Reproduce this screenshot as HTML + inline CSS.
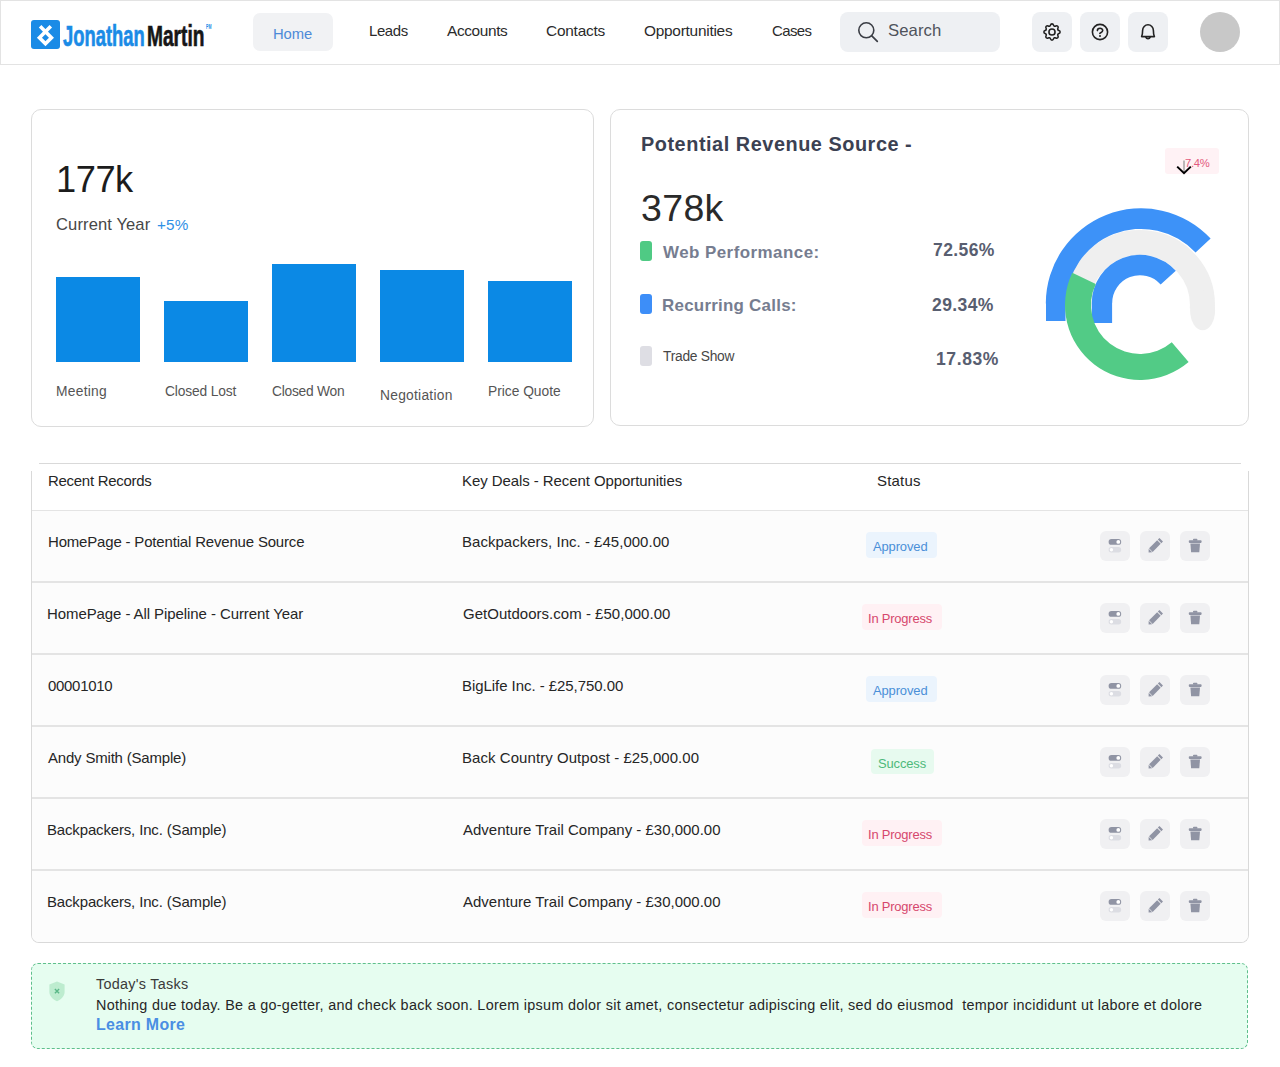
<!DOCTYPE html>
<html><head><meta charset="utf-8"><title>Dashboard</title>
<style>
html,body{margin:0;padding:0;background:#ffffff;}
body{width:1280px;height:1067px;position:relative;overflow:hidden;font-family:"Liberation Sans",sans-serif;}
.t{position:absolute;white-space:pre;font-family:"Liberation Sans",sans-serif;}
.b{position:absolute;box-sizing:border-box;}
svg{position:absolute;overflow:visible;}
</style></head><body>

<div class="b" style="left:0;top:0;width:1280px;height:65px;border:1px solid #e3e3e3;background:#fff"></div>
<svg style="left:31px;top:20px" width="29" height="29" viewBox="0 0 29 29"><rect x="0" y="0" width="29" height="29" rx="3" fill="#1a8be6"/><path d="M9.1 6.3 L20.45 17.65 L14.45 23.65 L8.45 17.65 L19.8 6.3" fill="none" stroke="#fff" stroke-width="3.6" stroke-linejoin="miter" stroke-miterlimit="10"/></svg>
<div class="b" style="left:253px;top:13px;width:80px;height:38px;border-radius:7px;background:#f1f2f4"></div>
<div class="b" style="left:840px;top:12px;width:160px;height:40px;border-radius:8px;background:#eef0f3"></div>
<svg style="left:840px;top:12px" width="40" height="40" viewBox="840 12 40 40"><circle cx="866.3" cy="30.3" r="7.5" fill="none" stroke="#3b3e45" stroke-width="1.6"/><path d="M871.8 35.8 L877.3 41.3" stroke="#3b3e45" stroke-width="1.7" stroke-linecap="round"/></svg>
<div class="b" style="left:1032px;top:12px;width:40px;height:40px;border-radius:8px;background:#eef0f3"></div>
<div class="b" style="left:1080px;top:12px;width:40px;height:40px;border-radius:8px;background:#eef0f3"></div>
<div class="b" style="left:1128px;top:12px;width:40px;height:40px;border-radius:8px;background:#eef0f3"></div>
<svg style="left:1036px;top:16px" width="32" height="32" viewBox="0 0 32 32"><g transform="translate(16 16) scale(0.9) translate(-12 -12)" fill="none" stroke="#222" stroke-width="1.75" stroke-linejoin="round"><path d="M10.325 4.317c.426 -1.756 2.924 -1.756 3.35 0a1.724 1.724 0 0 0 2.573 1.066c1.543 -.94 3.31 .826 2.37 2.37a1.724 1.724 0 0 0 1.065 2.572c1.756 .426 1.756 2.924 0 3.35a1.724 1.724 0 0 0 -1.066 2.573c.94 1.543 -.826 3.31 -2.37 2.37a1.724 1.724 0 0 0 -2.572 1.065c-.426 1.756 -2.924 1.756 -3.35 0a1.724 1.724 0 0 0 -2.573 -1.066c-1.543 .94 -3.31 -.826 -2.37 -2.37a1.724 1.724 0 0 0 -1.065 -2.572c-1.756 -.426 -1.756 -2.924 0 -3.35a1.724 1.724 0 0 0 1.066 -2.573c-.94 -1.543 .826 -3.31 2.37 -2.37c1 .608 2.296 .07 2.572 -1.065z"/><circle cx="12" cy="12" r="3.4"/></g></svg>
<svg style="left:1084px;top:16px" width="32" height="32" viewBox="0 0 32 32"><g fill="none" stroke="#222" stroke-width="1.6" stroke-linecap="round"><circle cx="16" cy="16" r="7.6"/><path d="M13.4 14.6 C13.4 11.4 18.7 11.4 18.7 14.5 C18.7 16.2 16.6 16.6 15.8 17.3"/></g><circle cx="16" cy="20" r="1" fill="#222"/></svg>
<svg style="left:1132px;top:16px" width="32" height="32" viewBox="0 0 32 32"><g fill="none" stroke="#222" stroke-width="1.6" stroke-linejoin="round" stroke-linecap="round"><path d="M9.6 20.6 Q10.6 18.6 10.6 14.4 A5.4 5.6 0 0 1 21.4 14.4 Q21.4 18.6 22.4 20.6 Z"/><path d="M13.8 21 A2.3 2.3 0 0 0 18.2 21"/></g></svg>
<div class="b" style="left:1200px;top:12px;width:40px;height:40px;border-radius:50%;background:#c8c8c8"></div>
<div class="b" style="left:31px;top:109px;width:563px;height:318px;border:1px solid #dcdcdc;border-radius:10px;background:#fff"></div>
<div class="b" style="left:56px;top:277px;width:84px;height:85px;background:#0b89e5"></div>
<div class="b" style="left:164px;top:301px;width:84px;height:61px;background:#0b89e5"></div>
<div class="b" style="left:272px;top:264px;width:84px;height:98px;background:#0b89e5"></div>
<div class="b" style="left:380px;top:270px;width:84px;height:92px;background:#0b89e5"></div>
<div class="b" style="left:488px;top:281px;width:84px;height:81px;background:#0b89e5"></div>
<div class="b" style="left:610px;top:109px;width:639px;height:317px;border:1px solid #dcdcdc;border-radius:10px;background:#fff"></div>
<div class="b" style="left:640px;top:241px;width:12px;height:20px;border-radius:3px;background:#4fca84"></div>
<div class="b" style="left:640px;top:293.5px;width:12px;height:20px;border-radius:3px;background:#3d8ef8"></div>
<div class="b" style="left:640px;top:346px;width:12px;height:19.5px;border-radius:3px;background:#dedee4"></div>
<div class="b" style="left:1165px;top:148px;width:54px;height:26px;border-radius:3px;background:#fff2f5"></div>
<svg style="left:1020px;top:190px" width="220" height="210" viewBox="1020 190 220 210"><path d="M1077.84 299.56 A62.40 62.40 0 0 1 1202.25 309.35" fill="none" stroke="#efefef" stroke-width="25"/><ellipse cx="1202.6" cy="310.5" rx="12.5" ry="19.8" fill="#efefef"/><path d="M1045.80 303.50 A95.20 95.20 0 0 1 1210.62 238.57 L1195.56 252.62 A74.60 74.60 0 0 0 1066.40 303.50 Z M1046 303.5 L1065.5 303.5 L1065.5 321 L1046 321 Z" fill="#3d92f8"/><path d="M1091.80 303.00 A48.20 48.20 0 0 1 1175.82 270.75 L1160.66 284.40 A27.80 27.80 0 0 0 1112.20 303.00 Z M1091.8 303 L1112.1 303 L1112.1 323 L1091.8 323 Z" fill="#3d92f8"/><path d="M1188.61 362.12 A75.00 75.00 0 0 1 1072.31 272.71 L1095.77 283.90 A49.00 49.00 0 0 0 1171.76 342.32 Z" fill="#52cb86"/></svg>
<div class="b" style="left:39px;top:463px;width:1202px;height:1px;background:#d9d9d9"></div>
<div class="b" style="left:31px;top:471px;width:1218px;height:472px;border:1px solid #d9d9d9;border-top:none;border-radius:0 0 8px 8px;background:#fff"></div>
<div class="b" style="left:32px;top:510px;width:1216px;height:1px;background:#e4e4e4"></div>
<div class="b" style="left:32px;top:511px;width:1216px;height:70px;background:#fcfcfc;"></div>
<div class="b" style="left:32px;top:581px;width:1216px;height:2px;background:#e4e4e4"></div>
<div class="b" style="left:32px;top:583px;width:1216px;height:70px;background:#fcfcfc;"></div>
<div class="b" style="left:32px;top:653px;width:1216px;height:2px;background:#e4e4e4"></div>
<div class="b" style="left:32px;top:655px;width:1216px;height:70px;background:#fcfcfc;"></div>
<div class="b" style="left:32px;top:725px;width:1216px;height:2px;background:#e4e4e4"></div>
<div class="b" style="left:32px;top:727px;width:1216px;height:70px;background:#fcfcfc;"></div>
<div class="b" style="left:32px;top:797px;width:1216px;height:2px;background:#e4e4e4"></div>
<div class="b" style="left:32px;top:799px;width:1216px;height:70px;background:#fcfcfc;"></div>
<div class="b" style="left:32px;top:869px;width:1216px;height:2px;background:#e4e4e4"></div>
<div class="b" style="left:32px;top:871px;width:1216px;height:71px;background:#fcfcfc;border-radius:0 0 7px 7px;"></div>
<div class="b" style="left:866px;top:532.2px;width:71px;height:25.5px;border-radius:4px;background:#ebf4fd"></div>
<div class="b" style="left:1100px;top:531px;width:30px;height:30px;border-radius:6px;background:#f0f0f2"></div>
<div class="b" style="left:1140px;top:531px;width:30px;height:30px;border-radius:6px;background:#f0f0f2"></div>
<div class="b" style="left:1180px;top:531px;width:30px;height:30px;border-radius:6px;background:#f0f0f2"></div>
<svg style="left:1100px;top:531px" width="30" height="30" viewBox="0 0 30 30"><rect x="8.6" y="8" width="12.6" height="5.8" rx="2.9" fill="#9094a4"/><circle cx="18.3" cy="10.9" r="1.9" fill="#fff"/><rect x="8.6" y="16" width="12.6" height="5.4" rx="2.7" fill="#dcdde3"/><circle cx="11.4" cy="18.7" r="1.7" fill="#fff"/></svg>
<svg style="left:1140px;top:531px" width="30" height="30" viewBox="0 0 30 30"><path d="M9.09 17.37 L17.16 9.31 L20.69 12.84 L12.63 20.91 Z" fill="#9094a4"/><path d="M17.86 8.60 L19.43 7.03 L22.97 10.57 L21.40 12.14 Z" fill="#9094a4"/><path d="M8.60 21.40 L8.67 17.79 L12.21 21.33 Z" fill="#9094a4"/></svg>
<svg style="left:1180px;top:531px" width="30" height="30" viewBox="0 0 30 30"><rect x="8.8" y="9.3" width="12.8" height="2.6" rx="0.8" fill="#9094a4"/><rect x="13" y="7.8" width="4.4" height="2" rx="0.8" fill="#9094a4"/><path d="M10.4 12.6 L20 12.6 L19.3 21.2 L11.1 21.2 Z" fill="#9094a4"/></svg>
<div class="b" style="left:862px;top:604.2px;width:80px;height:25.5px;border-radius:4px;background:#fff1f4"></div>
<div class="b" style="left:1100px;top:603px;width:30px;height:30px;border-radius:6px;background:#f0f0f2"></div>
<div class="b" style="left:1140px;top:603px;width:30px;height:30px;border-radius:6px;background:#f0f0f2"></div>
<div class="b" style="left:1180px;top:603px;width:30px;height:30px;border-radius:6px;background:#f0f0f2"></div>
<svg style="left:1100px;top:603px" width="30" height="30" viewBox="0 0 30 30"><rect x="8.6" y="8" width="12.6" height="5.8" rx="2.9" fill="#9094a4"/><circle cx="18.3" cy="10.9" r="1.9" fill="#fff"/><rect x="8.6" y="16" width="12.6" height="5.4" rx="2.7" fill="#dcdde3"/><circle cx="11.4" cy="18.7" r="1.7" fill="#fff"/></svg>
<svg style="left:1140px;top:603px" width="30" height="30" viewBox="0 0 30 30"><path d="M9.09 17.37 L17.16 9.31 L20.69 12.84 L12.63 20.91 Z" fill="#9094a4"/><path d="M17.86 8.60 L19.43 7.03 L22.97 10.57 L21.40 12.14 Z" fill="#9094a4"/><path d="M8.60 21.40 L8.67 17.79 L12.21 21.33 Z" fill="#9094a4"/></svg>
<svg style="left:1180px;top:603px" width="30" height="30" viewBox="0 0 30 30"><rect x="8.8" y="9.3" width="12.8" height="2.6" rx="0.8" fill="#9094a4"/><rect x="13" y="7.8" width="4.4" height="2" rx="0.8" fill="#9094a4"/><path d="M10.4 12.6 L20 12.6 L19.3 21.2 L11.1 21.2 Z" fill="#9094a4"/></svg>
<div class="b" style="left:866px;top:676.2px;width:71px;height:25.5px;border-radius:4px;background:#ebf4fd"></div>
<div class="b" style="left:1100px;top:675px;width:30px;height:30px;border-radius:6px;background:#f0f0f2"></div>
<div class="b" style="left:1140px;top:675px;width:30px;height:30px;border-radius:6px;background:#f0f0f2"></div>
<div class="b" style="left:1180px;top:675px;width:30px;height:30px;border-radius:6px;background:#f0f0f2"></div>
<svg style="left:1100px;top:675px" width="30" height="30" viewBox="0 0 30 30"><rect x="8.6" y="8" width="12.6" height="5.8" rx="2.9" fill="#9094a4"/><circle cx="18.3" cy="10.9" r="1.9" fill="#fff"/><rect x="8.6" y="16" width="12.6" height="5.4" rx="2.7" fill="#dcdde3"/><circle cx="11.4" cy="18.7" r="1.7" fill="#fff"/></svg>
<svg style="left:1140px;top:675px" width="30" height="30" viewBox="0 0 30 30"><path d="M9.09 17.37 L17.16 9.31 L20.69 12.84 L12.63 20.91 Z" fill="#9094a4"/><path d="M17.86 8.60 L19.43 7.03 L22.97 10.57 L21.40 12.14 Z" fill="#9094a4"/><path d="M8.60 21.40 L8.67 17.79 L12.21 21.33 Z" fill="#9094a4"/></svg>
<svg style="left:1180px;top:675px" width="30" height="30" viewBox="0 0 30 30"><rect x="8.8" y="9.3" width="12.8" height="2.6" rx="0.8" fill="#9094a4"/><rect x="13" y="7.8" width="4.4" height="2" rx="0.8" fill="#9094a4"/><path d="M10.4 12.6 L20 12.6 L19.3 21.2 L11.1 21.2 Z" fill="#9094a4"/></svg>
<div class="b" style="left:871px;top:748.7px;width:63px;height:25.5px;border-radius:4px;background:#e7faef"></div>
<div class="b" style="left:1100px;top:747px;width:30px;height:30px;border-radius:6px;background:#f0f0f2"></div>
<div class="b" style="left:1140px;top:747px;width:30px;height:30px;border-radius:6px;background:#f0f0f2"></div>
<div class="b" style="left:1180px;top:747px;width:30px;height:30px;border-radius:6px;background:#f0f0f2"></div>
<svg style="left:1100px;top:747px" width="30" height="30" viewBox="0 0 30 30"><rect x="8.6" y="8" width="12.6" height="5.8" rx="2.9" fill="#9094a4"/><circle cx="18.3" cy="10.9" r="1.9" fill="#fff"/><rect x="8.6" y="16" width="12.6" height="5.4" rx="2.7" fill="#dcdde3"/><circle cx="11.4" cy="18.7" r="1.7" fill="#fff"/></svg>
<svg style="left:1140px;top:747px" width="30" height="30" viewBox="0 0 30 30"><path d="M9.09 17.37 L17.16 9.31 L20.69 12.84 L12.63 20.91 Z" fill="#9094a4"/><path d="M17.86 8.60 L19.43 7.03 L22.97 10.57 L21.40 12.14 Z" fill="#9094a4"/><path d="M8.60 21.40 L8.67 17.79 L12.21 21.33 Z" fill="#9094a4"/></svg>
<svg style="left:1180px;top:747px" width="30" height="30" viewBox="0 0 30 30"><rect x="8.8" y="9.3" width="12.8" height="2.6" rx="0.8" fill="#9094a4"/><rect x="13" y="7.8" width="4.4" height="2" rx="0.8" fill="#9094a4"/><path d="M10.4 12.6 L20 12.6 L19.3 21.2 L11.1 21.2 Z" fill="#9094a4"/></svg>
<div class="b" style="left:862px;top:820.2px;width:80px;height:25.5px;border-radius:4px;background:#fff1f4"></div>
<div class="b" style="left:1100px;top:819px;width:30px;height:30px;border-radius:6px;background:#f0f0f2"></div>
<div class="b" style="left:1140px;top:819px;width:30px;height:30px;border-radius:6px;background:#f0f0f2"></div>
<div class="b" style="left:1180px;top:819px;width:30px;height:30px;border-radius:6px;background:#f0f0f2"></div>
<svg style="left:1100px;top:819px" width="30" height="30" viewBox="0 0 30 30"><rect x="8.6" y="8" width="12.6" height="5.8" rx="2.9" fill="#9094a4"/><circle cx="18.3" cy="10.9" r="1.9" fill="#fff"/><rect x="8.6" y="16" width="12.6" height="5.4" rx="2.7" fill="#dcdde3"/><circle cx="11.4" cy="18.7" r="1.7" fill="#fff"/></svg>
<svg style="left:1140px;top:819px" width="30" height="30" viewBox="0 0 30 30"><path d="M9.09 17.37 L17.16 9.31 L20.69 12.84 L12.63 20.91 Z" fill="#9094a4"/><path d="M17.86 8.60 L19.43 7.03 L22.97 10.57 L21.40 12.14 Z" fill="#9094a4"/><path d="M8.60 21.40 L8.67 17.79 L12.21 21.33 Z" fill="#9094a4"/></svg>
<svg style="left:1180px;top:819px" width="30" height="30" viewBox="0 0 30 30"><rect x="8.8" y="9.3" width="12.8" height="2.6" rx="0.8" fill="#9094a4"/><rect x="13" y="7.8" width="4.4" height="2" rx="0.8" fill="#9094a4"/><path d="M10.4 12.6 L20 12.6 L19.3 21.2 L11.1 21.2 Z" fill="#9094a4"/></svg>
<div class="b" style="left:862px;top:892.2px;width:80px;height:25.5px;border-radius:4px;background:#fff1f4"></div>
<div class="b" style="left:1100px;top:891px;width:30px;height:30px;border-radius:6px;background:#f0f0f2"></div>
<div class="b" style="left:1140px;top:891px;width:30px;height:30px;border-radius:6px;background:#f0f0f2"></div>
<div class="b" style="left:1180px;top:891px;width:30px;height:30px;border-radius:6px;background:#f0f0f2"></div>
<svg style="left:1100px;top:891px" width="30" height="30" viewBox="0 0 30 30"><rect x="8.6" y="8" width="12.6" height="5.8" rx="2.9" fill="#9094a4"/><circle cx="18.3" cy="10.9" r="1.9" fill="#fff"/><rect x="8.6" y="16" width="12.6" height="5.4" rx="2.7" fill="#dcdde3"/><circle cx="11.4" cy="18.7" r="1.7" fill="#fff"/></svg>
<svg style="left:1140px;top:891px" width="30" height="30" viewBox="0 0 30 30"><path d="M9.09 17.37 L17.16 9.31 L20.69 12.84 L12.63 20.91 Z" fill="#9094a4"/><path d="M17.86 8.60 L19.43 7.03 L22.97 10.57 L21.40 12.14 Z" fill="#9094a4"/><path d="M8.60 21.40 L8.67 17.79 L12.21 21.33 Z" fill="#9094a4"/></svg>
<svg style="left:1180px;top:891px" width="30" height="30" viewBox="0 0 30 30"><rect x="8.8" y="9.3" width="12.8" height="2.6" rx="0.8" fill="#9094a4"/><rect x="13" y="7.8" width="4.4" height="2" rx="0.8" fill="#9094a4"/><path d="M10.4 12.6 L20 12.6 L19.3 21.2 L11.1 21.2 Z" fill="#9094a4"/></svg>
<div class="b" style="left:31px;top:963px;width:1217px;height:86px;border:1px dashed #5fbf8c;border-radius:7px;background:#e6fdf0"></div>
<svg style="left:48px;top:981px" width="18" height="21" viewBox="0 0 18 21"><path d="M9 0.6 L16.6 3.4 L16.6 11 C16.6 15.2 13 18.6 9 20.2 C5 18.6 1.4 15.2 1.4 11 L1.4 3.4 Z" fill="#bdeccf"/><path d="M6.9 8 L11.1 12.2 M11.1 8 L6.9 12.2" stroke="#5bb888" stroke-width="1.4"/></svg>
<div class="t" style="left:63px;top:21px;color:#1a8be6;font-weight:700;font-size:29.94px;line-height:29.94px;letter-spacing:0.000px;transform:scaleX(0.6137);transform-origin:0 0;-webkit-text-stroke:0.7px #1a8be6;">Jonathan</div>
<div class="t" style="left:147px;top:21px;color:#161616;font-weight:700;font-size:29.94px;line-height:29.94px;letter-spacing:0.000px;transform:scaleX(0.6397);transform-origin:0 0;-webkit-text-stroke:0.7px #161616;">Martin</div>
<div class="t" style="left:206px;top:24px;color:#1a8be6;font-weight:700;font-size:6.40px;line-height:6.40px;letter-spacing:0.000px;transform:scaleX(0.5669);transform-origin:0 0;">PM</div>
<div class="t" style="left:273px;top:27px;color:#4d8ad8;font-weight:400;font-size:14.81px;line-height:14.81px;letter-spacing:-0.067px;">Home</div>
<div class="t" style="left:369px;top:24px;color:#2b2b2b;font-weight:400;font-size:14.94px;line-height:14.94px;letter-spacing:-0.400px;">Leads</div>
<div class="t" style="left:447px;top:23px;color:#2b2b2b;font-weight:400;font-size:15.41px;line-height:15.41px;letter-spacing:-0.371px;">Accounts</div>
<div class="t" style="left:546px;top:23px;color:#2b2b2b;font-weight:400;font-size:15.41px;line-height:15.41px;letter-spacing:-0.229px;">Contacts</div>
<div class="t" style="left:644px;top:23px;color:#2b2b2b;font-weight:400;font-size:15.41px;line-height:15.41px;letter-spacing:-0.250px;">Opportunities</div>
<div class="t" style="left:772px;top:24px;color:#2b2b2b;font-weight:400;font-size:14.94px;line-height:14.94px;letter-spacing:-0.600px;">Cases</div>
<div class="t" style="left:888px;top:23px;color:#4f535b;font-weight:400;font-size:16.72px;line-height:16.72px;letter-spacing:0.080px;">Search</div>
<div class="t" style="left:56px;top:162px;color:#1c1c1c;font-weight:400;font-size:36.28px;line-height:36.28px;letter-spacing:-0.467px;">177k</div>
<div class="t" style="left:56px;top:217px;color:#474747;font-weight:400;font-size:16.57px;line-height:16.57px;letter-spacing:0.109px;">Current Year</div>
<div class="t" style="left:157px;top:217px;color:#2f8fe6;font-weight:400;font-size:15.24px;line-height:15.24px;letter-spacing:0.200px;">+5%</div>
<div class="t" style="left:56px;top:385px;color:#555555;font-weight:400;font-size:13.81px;line-height:13.81px;letter-spacing:0.267px;">Meeting</div>
<div class="t" style="left:165px;top:385px;color:#555555;font-weight:400;font-size:13.81px;line-height:13.81px;letter-spacing:-0.140px;">Closed Lost</div>
<div class="t" style="left:272px;top:385px;color:#555555;font-weight:400;font-size:13.81px;line-height:13.81px;letter-spacing:-0.244px;">Closed Won</div>
<div class="t" style="left:380px;top:389px;color:#555555;font-weight:400;font-size:13.81px;line-height:13.81px;letter-spacing:0.260px;">Negotiation</div>
<div class="t" style="left:488px;top:385px;color:#555555;font-weight:400;font-size:13.81px;line-height:13.81px;letter-spacing:-0.020px;">Price Quote</div>
<div class="t" style="left:641px;top:135px;color:#3b4152;font-weight:700;font-size:19.86px;line-height:19.86px;letter-spacing:0.544px;">Potential Revenue Source -</div>
<div class="t" style="left:641px;top:190px;color:#2a2a2a;font-weight:400;font-size:37.50px;line-height:37.50px;letter-spacing:0.333px;">378k</div>
<div class="t" style="left:663px;top:245px;color:#767d90;font-weight:700;font-size:16.95px;line-height:16.95px;letter-spacing:0.453px;">Web Performance:</div>
<div class="t" style="left:933px;top:242px;color:#585e70;font-weight:700;font-size:17.55px;line-height:17.55px;letter-spacing:0.400px;">72.56%</div>
<div class="t" style="left:662px;top:298px;color:#767d90;font-weight:700;font-size:16.95px;line-height:16.95px;letter-spacing:0.240px;">Recurring Calls:</div>
<div class="t" style="left:932px;top:297px;color:#585e70;font-weight:700;font-size:17.55px;line-height:17.55px;letter-spacing:0.400px;">29.34%</div>
<div class="t" style="left:663px;top:350px;color:#474747;font-weight:400;font-size:13.81px;line-height:13.81px;letter-spacing:-0.267px;">Trade Show</div>
<div class="t" style="left:936px;top:351px;color:#585e70;font-weight:700;font-size:17.55px;line-height:17.55px;letter-spacing:0.600px;">17.83%</div>
<div class="t" style="left:1185px;top:158px;color:#e35a7d;font-weight:400;font-size:11.26px;line-height:11.26px;letter-spacing:-0.333px;">7.4%</div>
<div class="t" style="left:48px;top:474px;color:#262626;font-weight:400;font-size:14.97px;line-height:14.97px;letter-spacing:-0.277px;">Recent Records</div>
<div class="t" style="left:462px;top:474px;color:#262626;font-weight:400;font-size:14.97px;line-height:14.97px;letter-spacing:-0.065px;">Key Deals - Recent Opportunities</div>
<div class="t" style="left:877px;top:474px;color:#262626;font-weight:400;font-size:14.97px;line-height:14.97px;letter-spacing:0.200px;">Status</div>
<div class="t" style="left:48px;top:535px;color:#262626;font-weight:400;font-size:14.97px;line-height:14.97px;letter-spacing:-0.165px;">HomePage - Potential Revenue Source</div>
<div class="t" style="left:462px;top:535px;color:#262626;font-weight:400;font-size:14.97px;line-height:14.97px;letter-spacing:0.034px;">Backpackers, Inc. - £45,000.00</div>
<div class="t" style="left:47px;top:607px;color:#262626;font-weight:400;font-size:14.97px;line-height:14.97px;letter-spacing:-0.070px;">HomePage - All Pipeline - Current Year</div>
<div class="t" style="left:463px;top:607px;color:#262626;font-weight:400;font-size:14.97px;line-height:14.97px;letter-spacing:0.037px;">GetOutdoors.com - £50,000.00</div>
<div class="t" style="left:48px;top:679px;color:#262626;font-weight:400;font-size:14.97px;line-height:14.97px;letter-spacing:-0.286px;">00001010</div>
<div class="t" style="left:462px;top:679px;color:#262626;font-weight:400;font-size:14.97px;line-height:14.97px;letter-spacing:-0.042px;">BigLife Inc. - £25,750.00</div>
<div class="t" style="left:48px;top:751px;color:#262626;font-weight:400;font-size:14.97px;line-height:14.97px;letter-spacing:-0.178px;">Andy Smith (Sample)</div>
<div class="t" style="left:462px;top:751px;color:#262626;font-weight:400;font-size:14.97px;line-height:14.97px;letter-spacing:0.075px;">Back Country Outpost - £25,000.00</div>
<div class="t" style="left:47px;top:823px;color:#262626;font-weight:400;font-size:14.97px;line-height:14.97px;letter-spacing:-0.144px;">Backpackers, Inc. (Sample)</div>
<div class="t" style="left:463px;top:823px;color:#262626;font-weight:400;font-size:14.97px;line-height:14.97px;letter-spacing:0.011px;">Adventure Trail Company - £30,000.00</div>
<div class="t" style="left:47px;top:895px;color:#262626;font-weight:400;font-size:14.97px;line-height:14.97px;letter-spacing:-0.144px;">Backpackers, Inc. (Sample)</div>
<div class="t" style="left:463px;top:895px;color:#262626;font-weight:400;font-size:14.97px;line-height:14.97px;letter-spacing:0.011px;">Adventure Trail Company - £30,000.00</div>
<div class="t" style="left:873px;top:541px;color:#4a8fd8;font-weight:400;font-size:12.94px;line-height:12.94px;letter-spacing:-0.114px;">Approved</div>
<div class="t" style="left:868px;top:613px;color:#d6476d;font-weight:400;font-size:12.94px;line-height:12.94px;letter-spacing:-0.200px;">In Progress</div>
<div class="t" style="left:873px;top:685px;color:#4a8fd8;font-weight:400;font-size:12.94px;line-height:12.94px;letter-spacing:-0.114px;">Approved</div>
<div class="t" style="left:878px;top:758px;color:#4db97a;font-weight:400;font-size:12.94px;line-height:12.94px;letter-spacing:-0.133px;">Success</div>
<div class="t" style="left:868px;top:829px;color:#d6476d;font-weight:400;font-size:12.94px;line-height:12.94px;letter-spacing:-0.200px;">In Progress</div>
<div class="t" style="left:868px;top:901px;color:#d6476d;font-weight:400;font-size:12.94px;line-height:12.94px;letter-spacing:-0.200px;">In Progress</div>
<div class="t" style="left:96px;top:977px;color:#3a3a3a;font-weight:400;font-size:14.39px;line-height:14.39px;letter-spacing:0.283px;">Today&#x27;s Tasks</div>
<div class="t" style="left:96px;top:998px;color:#262626;font-weight:400;font-size:14.39px;line-height:14.39px;letter-spacing:0.293px;">Nothing due today. Be a go-getter, and check back soon. Lorem ipsum dolor sit amet, consectetur adipiscing elit, sed do eiusmod  tempor incididunt ut labore et dolore</div>
<div class="t" style="left:96px;top:1017px;color:#4a8ee3;font-weight:700;font-size:15.95px;line-height:15.95px;letter-spacing:0.333px;">Learn More</div>
<svg style="left:1170px;top:155px" width="30" height="25" viewBox="1170 155 30 25"><path d="M1184 160.5 L1184 173" stroke="#a0a0a0" stroke-width="1.4"/><path d="M1177.2 166.6 L1184 173.2 L1190.8 166.6" fill="none" stroke="#000" stroke-width="2"/></svg>
</body></html>
